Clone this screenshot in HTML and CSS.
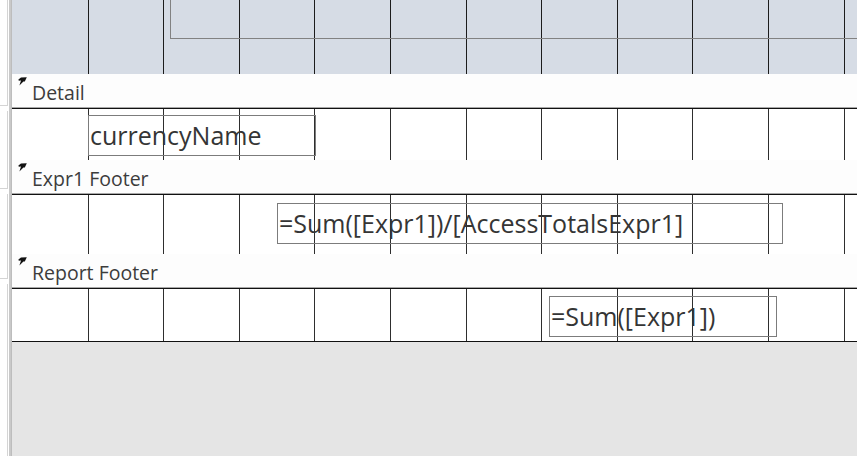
FILE: index.html
```html
<!DOCTYPE html>
<html>
<head>
<meta charset="utf-8">
<title>Report Design</title>
<link rel="stylesheet" href="styles.css">
</head>
<body>
<div class="designer">
  <div class="vruler">
    <div class="rseg rseg-head"></div>
    <div class="rseg rseg-bar"></div>
    <div class="rseg rseg-detail"></div>
    <div class="rseg rseg-bar"></div>
    <div class="rseg rseg-expr"></div>
    <div class="rseg rseg-bar"></div>
    <div class="rseg rseg-rest"></div>
  </div>
  <div class="splitter"></div>
  <div class="canvas">
    <div class="section sec-head">
      <i class="cell"></i><i class="cell"></i><i class="cell"></i><i class="cell"></i><i class="cell"></i><i class="cell"></i><i class="cell"></i><i class="cell"></i><i class="cell"></i><i class="cell"></i><i class="cell"></i><i class="cell"></i>
      <div class="ctl ctl-headbox"></div>
    </div>
    <div class="bar">
      <svg class="pin" viewBox="0 0 9 9" width="9" height="9"><path d="M8.8 0.3 L3 0.6 L0.4 2.6 L0.8 3.8 L3 3.5 L1.4 8.4 L5.4 4.4 L6.8 4.6 Z" fill="#121212"/></svg>
      <span class="bar-label">Detail</span>
    </div>
    <div class="section sec-detail">
      <i class="cell"></i><i class="cell"></i><i class="cell"></i><i class="cell"></i><i class="cell"></i><i class="cell"></i><i class="cell"></i><i class="cell"></i><i class="cell"></i><i class="cell"></i><i class="cell"></i><i class="cell"></i>
      <div class="ctl ctl-name">currencyName</div>
    </div>
    <div class="bar">
      <svg class="pin" viewBox="0 0 9 9" width="9" height="9"><path d="M8.8 0.3 L3 0.6 L0.4 2.6 L0.8 3.8 L3 3.5 L1.4 8.4 L5.4 4.4 L6.8 4.6 Z" fill="#121212"/></svg>
      <span class="bar-label">Expr1 Footer</span>
    </div>
    <div class="section sec-expr">
      <i class="cell"></i><i class="cell"></i><i class="cell"></i><i class="cell"></i><i class="cell"></i><i class="cell"></i><i class="cell"></i><i class="cell"></i><i class="cell"></i><i class="cell"></i><i class="cell"></i><i class="cell"></i>
      <div class="ctl ctl-ratio">=Sum([Expr1])/[AccessTotalsExpr1]</div>
    </div>
    <div class="bar">
      <svg class="pin" viewBox="0 0 9 9" width="9" height="9"><path d="M8.8 0.3 L3 0.6 L0.4 2.6 L0.8 3.8 L3 3.5 L1.4 8.4 L5.4 4.4 L6.8 4.6 Z" fill="#121212"/></svg>
      <span class="bar-label">Report Footer</span>
    </div>
    <div class="section sec-report">
      <i class="cell"></i><i class="cell"></i><i class="cell"></i><i class="cell"></i><i class="cell"></i><i class="cell"></i><i class="cell"></i><i class="cell"></i><i class="cell"></i><i class="cell"></i><i class="cell"></i><i class="cell"></i>
      <div class="ctl ctl-sum">=Sum([Expr1])</div>
    </div>
    <div class="empty"></div>
  </div>
</div>
</body>
</html>
```

FILE: styles.css
```css
html, body {
  margin: 0;
  padding: 0;
  width: 857px;
  height: 456px;
  overflow: hidden;
  background: #ffffff;
  font-family: "Open Sans", "Noto Sans", sans-serif;
}

.designer {
  display: flex;
  height: 456px;
}

.vruler {
  width: 8px;
  flex: 0 0 8px;
  display: flex;
  flex-direction: column;
  background: #ffffff;
}

.rseg {
  box-sizing: border-box;
  border-right: 1px solid #d4d4d4;
}

.rseg-head { height: 77px; }
.rseg-bar { height: 29px; border-bottom: 1px solid #d4d4d4; margin-bottom: 5px; }
.rseg-detail { height: 49px; }
.rseg-expr { height: 56px; }
.rseg-rest { flex: 1; }

.splitter {
  width: 3px;
  flex: 0 0 3px;
  margin-left: 1px;
  background: #c9c9c9;
  box-shadow: inset -1px 0 0 #bdbdbd;
}

.canvas {
  flex: 1;
  display: flex;
  flex-direction: column;
  background: #e5e5e5;
  min-width: 0;
}

.section {
  position: relative;
  flex: 0 0 auto;
  display: flex;
  overflow: hidden;
  padding-left: 1px;
  background: #ffffff;
}

.cell {
  flex: 0 0 75.6px;
  box-sizing: border-box;
  border-right: 1px solid #2e2e2e;
}

.sec-head {
  height: 74px;
  background: #d6dce5;
}

.sec-head .cell { border-right-color: #1c1c1c; }

.sec-detail { height: 51px; }
.sec-expr { height: 59px; }
.sec-report {
  height: 53px;
  box-sizing: border-box;
  border-bottom: 1px solid #111111;
}

.bar {
  flex: 0 0 auto;
  height: 35px;
  box-sizing: border-box;
  background: #fdfdfd;
  border-bottom: 1px solid #111111;
  box-shadow: inset 0 -1px 0 #a8a8a8;
  display: flex;
  align-items: flex-start;
  padding-left: 6px;
  padding-top: 4px;
}

.pin {
  display: block;
  margin-top: -1px;
  width: 9px;
  height: 9px;
}

.bar-label {
  margin-left: 5px;
  font-size: 19.5px;
  line-height: 29px;
  color: #3c3c3c;
}

.ctl {
  position: absolute;
  box-sizing: border-box;
  border: 1px solid #7c7c7c;
  font-size: 25px;
  line-height: 38px;
  color: #353535;
  padding-left: 1px;
  white-space: nowrap;
}

.ctl-headbox {
  left: 158px;
  top: -2px;
  right: -4px;
  height: 41px;
  border-color: #828282;
}

.ctl-name {
  left: 76px;
  top: 6px;
  width: 228px;
  height: 41px;
}

.ctl-ratio {
  left: 265px;
  top: 8px;
  width: 506px;
  height: 41px;
}

.ctl-sum {
  left: 537px;
  top: 7px;
  width: 228px;
  height: 41px;
}

.empty {
  flex: 1;
  background: #e5e5e5;
}
```
